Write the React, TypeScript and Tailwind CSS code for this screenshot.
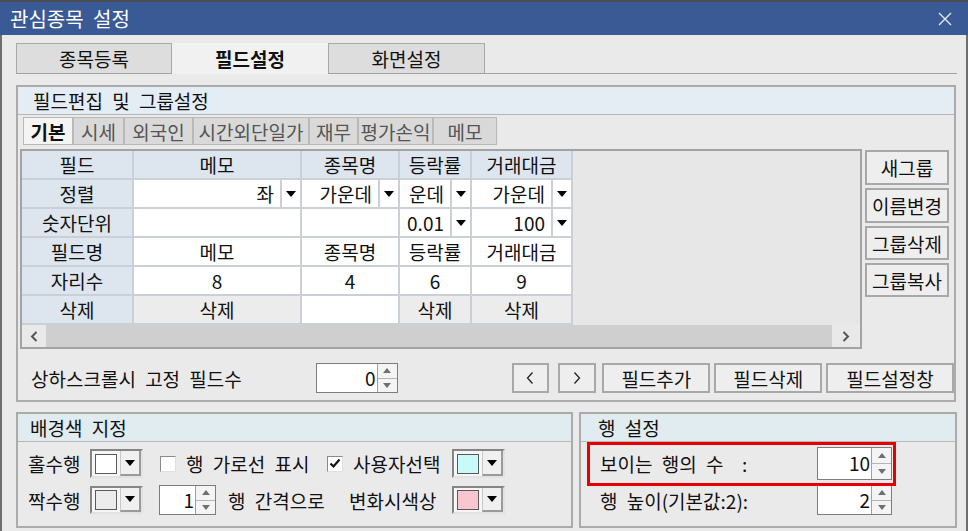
import React from 'react';

type CellKind = 'head' | 'white' | 'gray' | 'drop';
interface Cell {
  text: string;
  kind: CellKind;
}

const colWidths = ['w-[112px]', 'w-[168px]', 'w-[98px]', 'w-[72px]', 'w-[101px]'];

const gridRows: Cell[][] = [
  [
    { text: '필드', kind: 'head' },
    { text: '메모', kind: 'head' },
    { text: '종목명', kind: 'head' },
    { text: '등락률', kind: 'head' },
    { text: '거래대금', kind: 'head' },
  ],
  [
    { text: '정렬', kind: 'head' },
    { text: '좌', kind: 'drop' },
    { text: '가운데', kind: 'drop' },
    { text: '운데', kind: 'drop' },
    { text: '가운데', kind: 'drop' },
  ],
  [
    { text: '숫자단위', kind: 'head' },
    { text: '', kind: 'white' },
    { text: '', kind: 'white' },
    { text: '0.01', kind: 'drop' },
    { text: '100', kind: 'drop' },
  ],
  [
    { text: '필드명', kind: 'head' },
    { text: '메모', kind: 'white' },
    { text: '종목명', kind: 'white' },
    { text: '등락률', kind: 'white' },
    { text: '거래대금', kind: 'white' },
  ],
  [
    { text: '자리수', kind: 'head' },
    { text: '8', kind: 'white' },
    { text: '4', kind: 'white' },
    { text: '6', kind: 'white' },
    { text: '9', kind: 'white' },
  ],
  [
    { text: '삭제', kind: 'head' },
    { text: '삭제', kind: 'gray' },
    { text: '', kind: 'white' },
    { text: '삭제', kind: 'gray' },
    { text: '삭제', kind: 'gray' },
  ],
];

const subTabs = [
  { label: '기본', w: 'w-[50px]', active: true },
  { label: '시세', w: 'w-[51px]' },
  { label: '외국인', w: 'w-[69px]' },
  { label: '시간외단일가', w: 'w-[116px]' },
  { label: '재무', w: 'w-[49px]' },
  { label: '평가손익', w: 'w-[75px]' },
  { label: '메모', w: 'w-[64px]' },
];

const DownTri = ({ className = 'fill-black' }: { className?: string }) => (
  <svg width="10" height="6" viewBox="0 0 10 6" className={className}>
    <path d="M0 0 H10 L5 6 Z" />
  </svg>
);

const SmallTri = ({ up }: { up?: boolean }) => (
  <svg width="8" height="5" viewBox="0 0 8 5" className="fill-[#707070]">
    <path d={up ? 'M0 5 H8 L4 0 Z' : 'M0 0 H8 L4 5 Z'} />
  </svg>
);

const Spin = ({ value, className }: { value: string; className: string }) => (
  <div className={`flex bg-white border border-[#7d7d7d] ${className}`}>
    <div className="flex-1 flex items-center justify-end pr-[1px] leading-[1.3]">{value}</div>
    <div className="w-[20px] flex flex-col border-l border-[#a0a0a0] bg-[#f4f4f4]">
      <div className="flex-1 flex items-center justify-center border-b border-[#b4b4b4]">
        <SmallTri up />
      </div>
      <div className="flex-1 flex items-center justify-center">
        <SmallTri />
      </div>
    </div>
  </div>
);

const Btn = ({ children, className }: { children: React.ReactNode; className: string }) => (
  <button
    className={`flex items-center justify-center border-2 border-[#a8a8a8] bg-[#eeeeee] text-[#111] ${className}`}
  >
    {children}
  </button>
);

const Chevron = ({ right }: { right?: boolean }) => (
  <svg width="8" height="14" viewBox="0 0 8 14">
    <path
      d={right ? 'M1.5 1.5 L6.5 7 L1.5 12.5' : 'M6.5 1.5 L1.5 7 L6.5 12.5'}
      fill="none"
      stroke="#222"
      strokeWidth="1.3"
    />
  </svg>
);

const ColorCombo = ({ swatch }: { swatch: string }) => (
  <div className="w-[53px] h-full flex border-2 border-t-[#858585] border-l-[#858585] border-b-[#e2e2e2] border-r-[#e2e2e2] bg-[#f6f6f6]">
    <div className="flex-1 flex items-center justify-center">
      <div className={`w-[22px] h-[20px] border border-[#5a5a5a] ${swatch}`} />
    </div>
    <div className="w-[21px] flex items-center justify-center bg-[#f0f0f0] border-l border-[#c8c8c8] border-r-2 border-b-2 border-r-[#9a9a9a] border-b-[#9a9a9a]">
      <DownTri />
    </div>
  </div>
);

const CheckBox = ({ checked }: { checked?: boolean }) => (
  <div className="w-[16px] h-[16px] bg-white border border-t-[#8a8a8a] border-l-[#8a8a8a] border-b-[#e0e0e0] border-r-[#e0e0e0] flex items-center justify-center">
    {checked && (
      <svg width="12" height="11" viewBox="0 0 12 11">
        <path d="M1.5 5.5 L4.5 8.5 L10.5 1.5" fill="none" stroke="#111" strokeWidth="2.2" />
      </svg>
    )}
  </div>
);

const GridCell = ({ cell, w }: { cell: Cell; w: string }) => {
  const base = `${w} h-full flex items-center border-r-2 border-[#cbd0d6] overflow-hidden`;
  if (cell.kind === 'head')
    return <div className={`${base} justify-center bg-[#dde5ee]`}>{cell.text}</div>;
  if (cell.kind === 'gray')
    return <div className={`${base} justify-center bg-[#ececec]`}>{cell.text}</div>;
  if (cell.kind === 'drop')
    return (
      <div className={`${base} bg-white`}>
        <div className="flex-1 flex justify-end pr-[6px] whitespace-nowrap leading-[1.35]">{cell.text}</div>
        <div className="w-[20px] h-full flex items-center justify-center border-l-2 border-[#cbd0d6]">
          <DownTri />
        </div>
      </div>
    );
  return <div className={`${base} justify-center bg-white`}>{cell.text}</div>;
};

export default function App() {
  return (
    <div className="w-[968px] h-[531px] flex flex-col bg-[#ebeaeb] text-[19px] [word-spacing:5px] text-[#111] font-['Noto_Sans_CJK_KR','Noto_Sans',sans-serif] leading-none overflow-hidden">
      {/* 타이틀 바 */}
      <div className="h-[35px] flex-shrink-0 flex items-center justify-between bg-[#3a5a95] border-t-2 border-[#4c4c52] pl-[10px] pr-[16px]">
        <span className="text-white text-[20px]">관심종목 설정</span>
        <svg width="14" height="14" viewBox="0 0 14 14">
          <path d="M1 1 L13 13 M13 1 L1 13" stroke="#e4e8f2" strokeWidth="1.4" />
        </svg>
      </div>

      {/* 본문 */}
      <div className="flex-1 flex flex-col border-x-2 border-[#6e6e72] pl-[14px] pr-[7px]">
        {/* 메인 탭 */}
        <div className="mt-[8px] h-[31px] flex border-b border-[#a3a3a3] w-[941px]">
          <div className="w-[156px] h-[30px] flex items-center justify-center bg-[#dddddd] border border-b-0 border-[#a8a8a8]">
            종목등록
          </div>
          <div className="w-[156px] h-[31px] flex items-center justify-center bg-[#f1f1f1] font-bold">
            필드설정
          </div>
          <div className="w-[157px] h-[30px] flex items-center justify-center bg-[#dddddd] border border-b-0 border-[#a8a8a8]">
            화면설정
          </div>
        </div>

        {/* 필드편집 및 그룹설정 */}
        <div className="mt-[11px] w-[940px] h-[317px] flex flex-col border-2 border-[#ababab]">
          <div className="h-[28px] flex items-center bg-[#e4ecf4] border-b border-[#b6b6b6] pl-[15px]">
            필드편집 및 그룹설정
          </div>

          {/* 서브 탭 */}
          <div className="mt-[2px] ml-[5px] h-[28px] flex">
            {subTabs.map((t) => (
              <div
                key={t.label}
                className={`${t.w} h-full flex items-center justify-center border border-[#b9b9b9] ${
                  t.active ? 'bg-[#f4f4f4] font-bold text-[#111]' : 'bg-[#d9d9d9] text-[#555]'
                }`}
              >
                {t.label}
              </div>
            ))}
          </div>

          {/* 그리드 + 그룹 버튼 */}
          <div className="mt-[4px] ml-[2px] flex gap-[3px]">
            <div className="w-[842px] h-[200px] flex flex-col border-2 border-[#a3a3a3] bg-[#e7e7e7]">
              <div className="flex-1 flex flex-col">
                {gridRows.map((row, i) => (
                  <div key={i} className="h-[29px] flex">
                    <div className="flex border-b-2 border-[#cbd0d6]">
                      {row.map((cell, j) => (
                        <GridCell key={j} cell={cell} w={colWidths[j]} />
                      ))}
                    </div>
                  </div>
                ))}
              </div>
              <div className="h-[22px] flex bg-[#cfcfcf]">
                <div className="w-[24px] flex items-center justify-center bg-[#e9e9e9]">
                  <svg width="8" height="11" viewBox="0 0 8 11">
                    <path d="M6.5 1 L2 5.5 L6.5 10" fill="none" stroke="#555" strokeWidth="2" />
                  </svg>
                </div>
                <div className="flex-1" />
                <div className="w-[28px] flex items-center justify-center bg-[#e9e9e9]">
                  <svg width="8" height="11" viewBox="0 0 8 11">
                    <path d="M1.5 1 L6 5.5 L1.5 10" fill="none" stroke="#555" strokeWidth="2" />
                  </svg>
                </div>
              </div>
            </div>
            <div className="w-[84px] flex flex-col gap-[3px] pt-[1px]">
              <Btn className="h-[35px]">새그룹</Btn>
              <Btn className="h-[35px]">이름변경</Btn>
              <Btn className="h-[34px]">그룹삭제</Btn>
              <Btn className="h-[34px]">그룹복사</Btn>
            </div>
          </div>

          {/* 고정 필드수 + 필드 버튼 */}
          <div className="mt-[14px] h-[30px] flex items-center">
            <span className="ml-[13px] w-[285px]">상하스크롤시 고정 필드수</span>
            <Spin value="0" className="w-[82px] h-[30px]" />
            <Btn className="ml-[114px] w-[38px] h-[30px]">
              <Chevron />
            </Btn>
            <Btn className="ml-[9px] w-[38px] h-[30px]">
              <Chevron right />
            </Btn>
            <Btn className="ml-[6px] w-[108px] h-[30px]">필드추가</Btn>
            <Btn className="ml-[4px] w-[108px] h-[30px]">필드삭제</Btn>
            <Btn className="ml-[4px] w-[128px] h-[30px]">필드설정창</Btn>
          </div>
        </div>

        {/* 하단 설정 */}
        <div className="mt-[10px] flex gap-[6px]">
          {/* 배경색 지정 */}
          <div className="w-[557px] h-[116px] flex flex-col border-2 border-[#ababab]">
            <div className="h-[28px] flex items-center bg-[#e0ecf0] border-b border-[#b6b6b6] pl-[12px]">
              배경색 지정
            </div>
            <div className="mt-[7px] h-[29px] flex items-center pl-[10px]">
              <span className="w-[62px]">홀수행</span>
              <ColorCombo swatch="bg-white" />
              <div className="ml-[17px]">
                <CheckBox />
              </div>
              <span className="ml-[10px] w-[141px]">행 가로선 표시</span>
              <CheckBox checked />
              <span className="ml-[10px] w-[99px]">사용자선택</span>
              <ColorCombo swatch="bg-[#c9fafa]" />
            </div>
            <div className="mt-[7px] h-[30px] flex items-center pl-[10px]">
              <span className="w-[62px]">짝수행</span>
              <div className="h-[28px] flex">
                <ColorCombo swatch="bg-[#ececec]" />
              </div>
              <Spin value="1" className="ml-[16px] w-[57px] h-[30px]" />
              <span className="ml-[12px] w-[121px]">행 간격으로</span>
              <span className="w-[103px]">변화시색상</span>
              <div className="h-[28px] flex">
                <ColorCombo swatch="bg-[#f9c5cf]" />
              </div>
            </div>
          </div>

          {/* 행 설정 */}
          <div className="w-[378px] h-[116px] flex flex-col border-2 border-[#ababab]">
            <div className="h-[28px] flex items-center bg-[#e0ecf0] border-b border-[#b6b6b6] pl-[17px]">
              행 설정
            </div>
            <div className="relative flex-1 flex flex-col">
              <div className="mt-[5px] h-[33px] flex items-center pl-[19px]">
                <span className="w-[217px]">보이는 행의 수 &nbsp;:</span>
                <Spin value="10" className="w-[75px] h-[33px]" />
              </div>
              <div className="mt-[5px] h-[30px] flex items-center pl-[19px]">
                <span className="w-[217px]">행 높이(기본값:2):</span>
                <Spin value="2" className="w-[75px] h-[30px]" />
              </div>
              {/* 강조 표시 */}
              <div className="absolute left-[6px] top-0 w-[309px] h-[44px] border-[3px] border-[#e60000]" />
            </div>
          </div>
        </div>
      </div>
    </div>
  );
}
